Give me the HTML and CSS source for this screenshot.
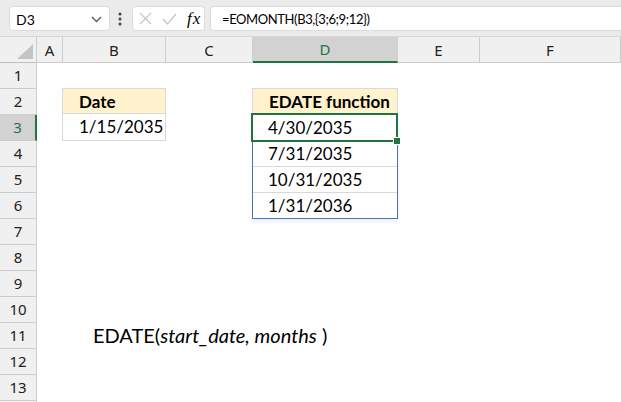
FILE: index.html
```html
<!DOCTYPE html>
<html lang="en">
<head>
    <meta charset="UTF-8">
    <title>EDATE function</title>
    <link rel="stylesheet" href="styles.css">
</head>
<body>
    <div class="toolbar">
        <div class="name-box">
            <span>D3</span>
            <svg class="chevron" width="11" height="7" viewBox="0 0 11 7"><path d="M1 1 L5.5 5.5 L10 1" fill="none" stroke="#555" stroke-width="1.3"/></svg>
        </div>
        <svg class="dots" width="4" height="14" viewBox="0 0 4 14"><circle cx="2" cy="2" r="1.5" fill="#444"/><circle cx="2" cy="7" r="1.5" fill="#444"/><circle cx="2" cy="12" r="1.5" fill="#444"/></svg>
        <div class="fx-box">
            <svg width="13" height="13" viewBox="0 0 13 13"><path d="M1 1 L12 12 M12 1 L1 12" stroke="#c4c4c4" stroke-width="1.2"/></svg>
            <svg width="15" height="12" viewBox="0 0 15 12"><path d="M1 6 L5.5 11 L14 1" fill="none" stroke="#c4c4c4" stroke-width="1.2"/></svg>
            <span class="fx">fx</span>
        </div>
        <div class="formula">=EOMONTH(B3,{3;6;9;12})</div>
    </div>

    <div class="sheet">
        <div class="corner"><span class="corner-tri"></span></div>
        <div class="ch">A</div>
        <div class="ch">B</div>
        <div class="ch">C</div>
        <div class="ch ch-sel">D</div>
        <div class="ch">E</div>
        <div class="ch">F</div>

        <div class="rh">1</div>
        <div class="rh">2</div>
        <div class="rh rh-sel">3</div>
        <div class="rh">4</div>
        <div class="rh">5</div>
        <div class="rh">6</div>
        <div class="rh">7</div>
        <div class="rh">8</div>
        <div class="rh">9</div>
        <div class="rh">10</div>
        <div class="rh">11</div>
        <div class="rh">12</div>
        <div class="rh">13</div>
        <div class="rh"></div>

        <div class="tbl tbl-date">
            <div class="cell cell-head">Date</div>
            <div class="cell">1/15/2035</div>
        </div>

        <div class="tbl tbl-edate">
            <div class="cell cell-head edate-head">EDATE function</div>
            <div class="range">
                <div class="cell">4/30/2035</div>
                <div class="cell">7/31/2035</div>
                <div class="cell">10/31/2035</div>
                <div class="cell cell-last">1/31/2036</div>
                <div class="selection"><span class="handle"></span></div>
            </div>
        </div>

        <div class="syntax">EDATE(<i>start_date, months</i> )</div>
    </div>
</body>
</html>
```

FILE: styles.css
```css
* {
    box-sizing: border-box;
    margin: 0;
    padding: 0;
}

body {
    font-family: Lato, "Noto Sans", sans-serif;
    background: #ffffff;
    color: #000;
    overflow: hidden;
}

.toolbar {
    height: 37px;
    background: #ebebeb;
    border-bottom: 1px solid #d6d6d6;
    display: flex;
    align-items: flex-start;
    padding: 6px 0 0 9px;
}

.name-box {
    width: 101px;
    height: 25px;
    background: #fff;
    border: 1px solid #dcdcdc;
    border-radius: 4px;
    display: flex;
    align-items: center;
    justify-content: space-between;
    padding: 1px 7px 0 6px;
    font-family: Lato, sans-serif;
    font-size: 14px;
}

.dots {
    margin: 6px 10px 0 8px;
}

.fx-box {
    width: 73px;
    height: 25px;
    background: #fff;
    border: 1px solid #dcdcdc;
    border-radius: 4px;
    display: flex;
    align-items: center;
    gap: 10px;
    padding-left: 6px;
}

.fx {
    font-family: "Liberation Serif", serif;
    font-style: italic;
    font-size: 17px;
    letter-spacing: 1px;
}

.formula {
    flex: 1;
    height: 25px;
    margin-left: 5px;
    background: #fff;
    border: 1px solid #dcdcdc;
    border-right: none;
    border-radius: 4px 0 0 4px;
    padding: 1px 0 0 11px;
    font-family: Lato, sans-serif;
    font-size: 13px;
    letter-spacing: -0.4px;
    line-height: 23px;
}

.sheet {
    display: grid;
    grid-template-columns: 37px 26px 103px 87px 145px 82px 1fr;
    grid-template-rows: repeat(15, 26px);
}

.corner,
.ch,
.rh {
    background: #f0f0f0;
    border-right: 1px solid #cdcdcd;
    border-bottom: 1px solid #cdcdcd;
    font-family: "Noto Sans", sans-serif;
    font-size: 15px;
    color: #222;
    display: flex;
    justify-content: center;
}

.corner {
    position: relative;
    border-bottom-color: #bdbdbd;
}

.corner-tri {
    position: absolute;
    right: 3px;
    bottom: 3px;
    width: 0;
    height: 0;
    border-left: 16px solid transparent;
    border-bottom: 15px solid #c4c4c4;
}

.ch {
    align-items: flex-end;
    padding-bottom: 2px;
}

.ch-sel {
    background: #d2d2d2;
    color: #217346;
    border-bottom: 2px solid #217346;
}

.rh {
    grid-column: 1;
    align-items: center;
    line-height: 25px;
}

.rh-sel {
    background: #d2d2d2;
    color: #217346;
    border-right: 2px solid #217346;
}

.tbl {
    margin: -1px 0 0 -1px;
    display: flex;
    flex-direction: column;
    font-size: 17px;
}

.tbl-date {
    grid-column: 3;
    grid-row: 3 / span 2;
    border: 1px solid #d9d9d9;
}

.tbl-date .cell-head {
    border-bottom: 1px solid #d9d9d9;
}

.cell {
    height: 25px;
    line-height: 25px;
    padding-left: 16px;
    white-space: nowrap;
}

.cell-head {
    background: #fff2cc;
    font-weight: bold;
}

.tbl-edate {
    grid-column: 5;
    grid-row: 3 / span 5;
    align-self: start;
}

.edate-head {
    height: 27px;
    border: 1px solid #d9d9d9;
}

.range {
    position: relative;
    border: 1px solid #4472c4;
    border-top: none;
    box-shadow: 0 3px 4px rgba(0, 0, 0, 0.06);
}

.range .cell {
    height: 26px;
    border-bottom: 1px solid #d9d9d9;
    padding-left: 15px;
}

.range .cell-last {
    height: 25px;
    border-bottom: none;
}

.selection {
    position: absolute;
    left: -2px;
    top: -2px;
    width: 147px;
    height: 29px;
    border: 2px solid #217346;
}

.handle {
    position: absolute;
    left: 140px;
    top: 22px;
    width: 8px;
    height: 8px;
    background: #217346;
    border: 1px solid #fff;
}

.syntax {
    grid-column: 3 / span 4;
    grid-row: 12;
    padding-left: 30px;
    font-size: 20px;
    line-height: 25px;
    white-space: nowrap;
}
```
